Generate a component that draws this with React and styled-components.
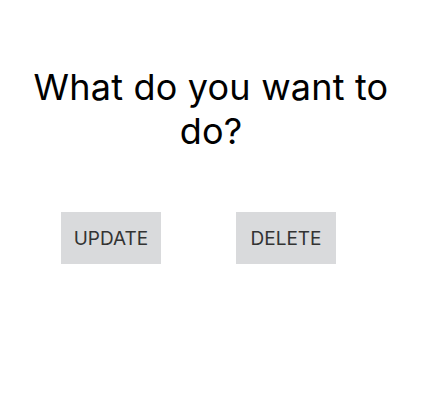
import React from 'react';
import styled, { createGlobalStyle } from 'styled-components';

const GlobalStyle = createGlobalStyle`
  html, body {
    margin: 0;
    padding: 0;
    background: #ffffff;
  }
  body {
    font-family: Inter, "Noto Sans", sans-serif;
  }
`;

const Page = styled.div`
  width: 422px;
  height: 404px;
  display: flex;
  flex-direction: column;
`;

const Title = styled.h1`
  margin: 65px 0 0;
  padding: 0 20px;
  font-size: 36px;
  font-weight: 400;
  letter-spacing: 0.2px;
  line-height: 44px;
  text-align: center;
  color: #000000;
`;

const Actions = styled.div`
  display: flex;
  gap: 75px;
  margin-top: 59px;
  padding-left: 61px;
`;

const ActionButton = styled.button`
  width: 100px;
  height: 52px;
  padding: 0;
  border: none;
  border-radius: 0;
  background: #d9dadc;
  color: #333333;
  font-family: Inter, "Noto Sans", sans-serif;
  font-size: 19px;
  text-transform: uppercase;
  cursor: pointer;
`;

const App = () => {
  return (
    <>
      <GlobalStyle />
      <Page>
        <Title>What do you want to do?</Title>
        <Actions>
          <ActionButton type="button">Update</ActionButton>
          <ActionButton type="button">Delete</ActionButton>
        </Actions>
      </Page>
    </>
  );
};

export default App;
